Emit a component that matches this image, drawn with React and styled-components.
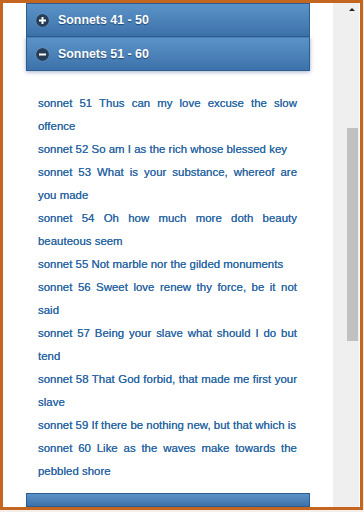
import React from 'react'
import styled, { createGlobalStyle } from 'styled-components'

const Global = createGlobalStyle`
  html, body {
    margin: 0;
    padding: 0;
    background: #f4efe8;
  }
  * {
    box-sizing: border-box;
  }
`

const Frame = styled.div`
  width: 363px;
  height: 510px;
  border: 3px solid #c4661f;
  background: #fff;
  display: flex;
  overflow: hidden;
  font-family: "Liberation Sans", Arial, sans-serif;
`

const Content = styled.div`
  width: 330px;
  padding-left: 23px;
  display: flex;
  flex-direction: column;
`

const Header = styled.div`
  width: 284px;
  height: ${(p) => (p.cut ? '14px' : '34px')};
  flex-shrink: 0;
  display: flex;
  align-items: center;
  gap: 9px;
  padding-left: 9px;
  border: 1px solid #2d5d8e;
  border-top-color: ${(p) => (p.open ? '#4a7fb5' : '#2d5d8e')};
  background: linear-gradient(#5b93c9, #3c72a9);
  color: #fff;
  font-size: 12.4px;
  font-weight: bold;
  text-shadow: 0 1px 1px #1f4670;
  box-shadow: ${(p) => (p.open ? '0 1px 4px rgba(40, 80, 130, 0.45)' : 'none')};
  margin-top: ${(p) => (p.cut ? 'auto' : '0')};
  align-self: flex-start;
`

const Icon = styled.span`
  width: 13px;
  height: 13px;
  border-radius: 50%;
  background: #263d57;
  display: flex;
  align-items: center;
  justify-content: center;
  box-shadow: 0 0 1px rgba(255, 255, 255, 0.5);
`

const List = styled.div`
  width: 284px;
  padding: 21px 13px 0 12px;
`

const Item = styled.div`
  font-size: 11.4px;
  letter-spacing: 0.03px;
  line-height: 23px;
  color: #2c67a3;
  text-align: justify;
  text-shadow: 0 0 0.6px #2c67a3;
`

const Scrollbar = styled.div`
  width: 26px;
  background: #efefef;
  display: flex;
  flex-direction: column;
  align-items: flex-end;
  padding-right: 1px;
`

const Arrow = styled.div`
  width: 0;
  height: 0;
  margin: 5px 3px 0 0;
  border-left: 3px solid transparent;
  border-right: 3px solid transparent;
  border-bottom: 3px solid #222;
`

const Thumb = styled.div`
  width: 11px;
  height: 213px;
  margin-top: 117px;
  background: #c1c1c1;
`

function PlusMinus({ plus }) {
  return (
    <svg width="9" height="9" viewBox="0 0 9 9">
      <rect x="1" y="3.5" width="7" height="2" fill="#fff" />
      {plus && <rect x="3.5" y="1" width="2" height="7" fill="#fff" />}
    </svg>
  )
}

const sonnets = [
  'sonnet 51 Thus can my love excuse the slow offence',
  'sonnet 52 So am I as the rich whose blessed key',
  'sonnet 53 What is your substance, whereof are you made',
  'sonnet 54 Oh how much more doth beauty beauteous seem',
  'sonnet 55 Not marble nor the gilded monuments',
  'sonnet 56 Sweet love renew thy force, be it not said',
  'sonnet 57 Being your slave what should I do but tend',
  'sonnet 58 That God forbid, that made me first your slave',
  'sonnet 59 If there be nothing new, but that which is',
  'sonnet 60 Like as the waves make towards the pebbled shore',
]

export default function App() {
  return (
    <>
      <Global />
      <Frame>
        <Content>
          <Header>
            <Icon>
              <PlusMinus plus />
            </Icon>
            Sonnets 41 - 50
          </Header>
          <Header open>
            <Icon>
              <PlusMinus />
            </Icon>
            Sonnets 51 - 60
          </Header>
          <List>
            {sonnets.map((s) => (
              <Item key={s}>{s}</Item>
            ))}
          </List>
          <Header cut />
        </Content>
        <Scrollbar>
          <Arrow />
          <Thumb />
        </Scrollbar>
      </Frame>
    </>
  )
}
